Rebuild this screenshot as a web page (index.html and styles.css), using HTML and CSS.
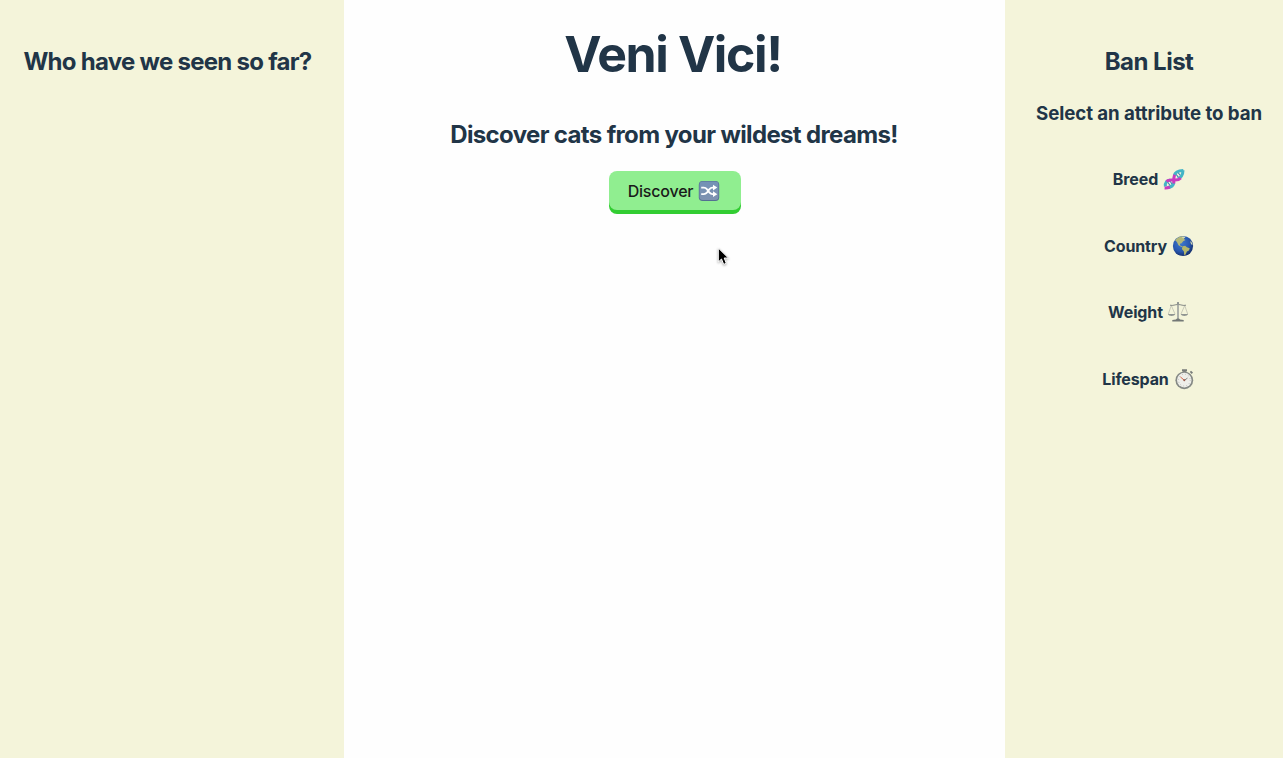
FILE: index.html
```html
<!DOCTYPE html>
<html lang="en">
<head>
<meta charset="utf-8">
<title>Veni Vici!</title>
<link rel="stylesheet" href="styles.css">
</head>
<body>
<div class="app">
  <aside class="history">
    <h2 class="side-title seen-title">Who have we seen so far?</h2>
  </aside>
  <main class="discover">
    <h1 class="title">Veni Vici!</h1>
    <h2 class="subtitle">Discover cats from your wildest dreams!</h2>
    <button class="discover-btn"><span class="btn-text">Discover</span>
      <svg class="icon" viewBox="0 0 22 22">
        <defs><linearGradient id="tile" x2="0" y2="1"><stop stop-color="#7392b6"/><stop offset="1" stop-color="#7f92b0"/></linearGradient></defs>
        <rect x=".8" y="1" width="20.4" height="20" rx="3.8" fill="#536f92"/>
        <rect x="1.5" y="1.6" width="19" height="18.4" rx="3.2" fill="url(#tile)"/>
        <path d="M3.2 7.6h2.6c1.5 0 2.4.7 3.3 1.8l2.2 3c.9 1.1 1.7 1.8 3.2 1.8h1.2M3.2 14.2h2.6c1.5 0 2.4-.7 3.3-1.8l2.2-3c.9-1.1 1.7-1.8 3.2-1.8h1.2" fill="none" stroke="#fff" stroke-width="1.8"/>
        <path d="M15 4.7l4.3 2.9-4.3 2.9zM15 11.3l4.3 2.9-4.3 2.9z" fill="#fff"/>
      </svg>
    </button>
  </main>
  <aside class="bans">
    <h2 class="side-title ban-title">Ban List</h2>
    <h3 class="ban-hint">Select an attribute to ban</h3>
    <ul class="attributes">
      <li class="attribute"><span class="breed">Breed</span>
        <svg class="icon" viewBox="0 0 22 22" fill="none">
          <path d="M4.5 14l3 4M7 13l2 3M12.8 6l2.7 3.4M15 4.5l2.4 3" stroke="#3f7fb5" stroke-width="1.1"/>
          <path d="M2.4 18.5C1.8 14.6 4 12.2 7.4 12M4.5 19.4c3.6-.2 6-1.8 6.3-4.9M11.4 7.2c.8-3.4 3.8-4.3 8.9-4.6M20 2.2c-.1 4.4-1.7 7.2-5.2 8.6" stroke="#43b4c6" stroke-width="3"/>
          <path d="M3.4 13.4c2-1.7 4.5-1.7 7.3-1.4 3 .3 5.2 0 7-2M10.8 15.4c0-2.8-.4-5.4.8-8.6M1.6 20c1.9.1 3.6-.1 5.3-.8" stroke="#c93cbf" stroke-width="3"/>
        </svg></li>
      <li class="attribute"><span class="country">Country</span>
        <svg class="icon" viewBox="0 0 22 22">
          <defs><radialGradient id="ocean" cx=".4" cy=".35" r=".65"><stop stop-color="#3e79cf"/><stop offset=".65" stop-color="#2857ae"/><stop offset="1" stop-color="#16316f"/></radialGradient></defs>
          <circle cx="11" cy="11" r="10.1" fill="url(#ocean)"/>
          <path d="M3.1 5.2C4.8 3 7.2 1.6 10.2 1.3l2.9 1-1.5 1.4 1.9 1.2-2.3 1.4-1.6 2-1.7.5.3 1.6 2.4 1.1-1.1.4-3-1.6-1.6-3.4z" fill="#b3b879"/>
          <path d="M10.5 11.2l2.7-.4 1.7 1.4 2.8 1-.8 2.2-2 1.1-1.5 3.2-1.2.4-.3-3.6-2-2.6z" fill="#b3b66b"/>
          <path d="M9.5 1.9l2.7-.4 1.2 1.2-2.3.8zM18.8 5.8l1.3 2.5.3 2-1.2-1.1-.8-1.6z" fill="#d5d9b5"/>
        </svg></li>
      <li class="attribute"><span class="weight">Weight</span>
        <svg class="icon" viewBox="0 0 22 22" fill="none">
          <path d="M4.3 4.5L1.3 13M4.3 4.5L8 13M17.7 4.5L14 13M17.7 4.5l3 8.5" stroke="#b6b7aa" stroke-width=".7"/>
          <path d="M3 4.2c3 .8 5-.7 8-.7s5 1.5 8 .7" stroke="#858985" stroke-width="1"/>
          <path d="M11 1.5V18" stroke="#969a98" stroke-width="1.5"/>
          <path d="M.9 13h7.4c-.6 2.5-6.8 2.5-7.4 0zM13.7 13h7.4c-.6 2.5-6.8 2.5-7.4 0z" fill="#8f9491"/>
          <path d="M5.3 20.5v-1.6l3.6-.3 1.1-1.1h2l1.1 1.1 3.6.3v1.6z" fill="#737876"/>
          <circle cx="11" cy="2" r="1.1" fill="#888d8b"/>
        </svg></li>
      <li class="attribute"><span class="lifespan">Lifespan</span>
        <svg class="icon" viewBox="0 0 22 22">
          <path d="M9 1.2h5v2.3h-1.2v2h-2.6v-2H9zM16.8 4.1l1.2-1.3 2 1.7-1.3 1.5z" fill="#777b79"/>
          <circle cx="11.3" cy="12.3" r="8.9" fill="#858985"/>
          <circle cx="11.3" cy="12.1" r="7.3" fill="#eeeee9"/>
          <circle cx="11.3" cy="12.1" r="5.9" fill="none" stroke="#9d9e9a" stroke-width=".8" stroke-dasharray=".7 2.39"/>
          <path d="M11.3 12.3L7.4 8.9" stroke="#d66548" stroke-width="1"/>
          <path d="M11.3 12.3l3.2-2.2" stroke="#555" stroke-width=".7"/>
          <circle cx="11.3" cy="12.3" r="1" fill="#965647"/>
        </svg></li>
    </ul>
  </aside>
</div>
<svg class="cursor" viewBox="0 0 14 20"><path d="M1.3 1v14l3.2-3 2.2 5.4 2.6-1.1L7.2 11h4.2z" fill="#000" stroke="#fff" stroke-width="1"/></svg>
</body>
</html>
```
FILE: styles.css
```css
* { box-sizing: border-box; }
body {
  margin: 0;
  background: #fefefe;
  color: #213547;
  font-family: Inter, "Liberation Sans", sans-serif;
}
h1, h2, h3, ul { margin: 0; padding: 0; }
h1, h2, h3 { white-space: nowrap; }
.app {
  display: grid;
  grid-template-columns: 344px 661px 278px;
  height: 758px;
  overflow: hidden;
}
.history, .bans {
  display: flex;
  flex-direction: column;
  align-items: center;
  background: #f4f4da;
}
.history { padding: 46px 9px 0 0; }
.bans { padding: 46px 0 0 10px; }
.discover {
  display: flex;
  flex-direction: column;
  align-items: center;
  padding-top: 24px;
}
.side-title, .subtitle { font-size: 24px; line-height: 31px; font-weight: 650; }
.seen-title { letter-spacing: -0.72px; }
.ban-title { letter-spacing: -0.5px; }
.title {
  padding-right: 3px;
  font-size: 50px;
  line-height: 60px;
  font-weight: 650;
  letter-spacing: -1.4px;
}
.subtitle { margin-top: 35px; padding-right: 1px; letter-spacing: -0.64px; }
.ban-hint {
  margin-top: 24px;
  font-size: 18.7px;
  line-height: 25px;
  font-weight: 650;
  letter-spacing: -0.08px;
}
.discover-btn {
  display: flex;
  align-items: center;
  justify-content: center;
  gap: 5px;
  width: 132px;
  height: 39px;
  margin-top: 21.4px;
  padding: 0 1px 0 0;
  border: 0;
  border-radius: 8px;
  background: #90ee90;
  box-shadow: 0 4px 0 #32cd32;
  color: #1a1a1a;
  font: 460 16px/20px Inter, "Liberation Sans", sans-serif;
  letter-spacing: -0.2px;
}
.attributes { list-style: none; padding-top: 20px; }
.attribute {
  display: flex;
  align-items: center;
  justify-content: center;
  gap: 4.5px;
  height: 66.5px;
  padding-right: .5px;
  font-size: 16px;
  font-weight: 650;
  letter-spacing: -0.12px;
}
.icon { display: block; width: 22px; height: 22px; flex: none; }
.cursor { position: absolute; left: 717px; top: 247px; width: 14px; height: 20px; filter: drop-shadow(0 1px 1px #0005); }
```
